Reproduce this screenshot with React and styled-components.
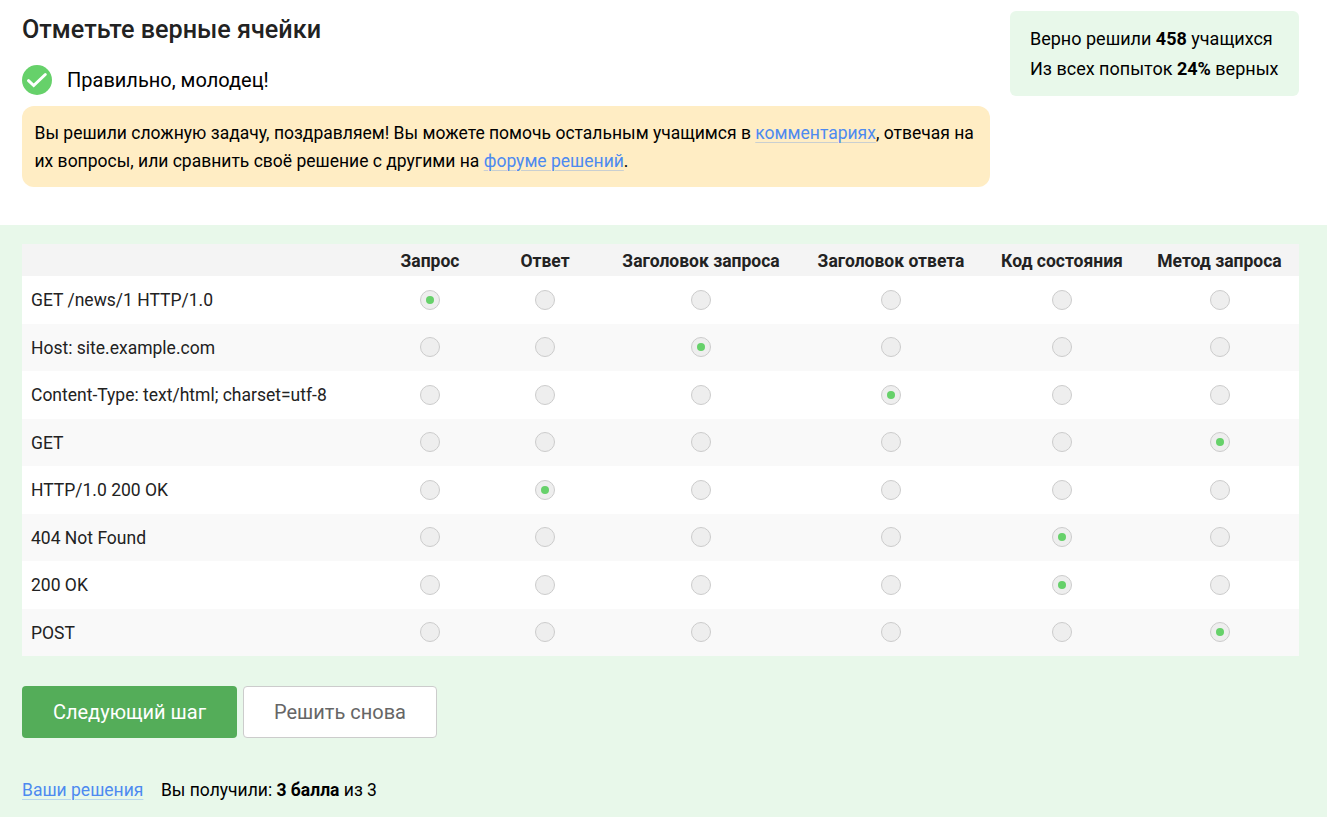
import React from "react";
import styled, { createGlobalStyle } from "styled-components";

const Global = createGlobalStyle`
  html, body { margin: 0; padding: 0; background: #fff; }
  body { font-family: Roboto, "Noto Sans", sans-serif; font-size: 17.5px; color: #000; }
`;
const Page = styled.div`width: 1327px; height: 817px; overflow: hidden; display: flex; flex-direction: column;`;
const Top = styled.section`
  height: 225px; box-sizing: border-box; padding: 0 28px 0 22px;
  display: flex; align-items: flex-start; gap: 20px;
`;
const Main = styled.div`width: 968px; flex: none;`;
const Title = styled.h1`
  margin: 0; padding-top: 15px; font-size: 25.2px; line-height: 30px; font-weight: 500; color: #222;
`;
const Status = styled.div`
  display: flex; align-items: center; gap: 15px; height: 30px; margin-top: 20px;
  font-size: 20px; line-height: 30px;
`;
const Message = styled.div`
  margin-top: 11px; padding: 12.5px 12px 12.5px 12.5px; background: #ffedc4; border-radius: 12px;
  line-height: 28px;
`;
const Link = styled.a`
  color: #4d8af0; text-decoration: underline 1px rgba(77, 138, 240, 0.3); text-underline-offset: 3px;
`;
const Stats = styled.aside`
  margin-top: 11px; width: 289px; height: 85px; box-sizing: border-box; padding: 13px 20px 11px;
  background: #e8f8ea; border-radius: 6px; font-size: 18px; line-height: 30px; white-space: nowrap;
`;
const Quiz = styled.section`flex: 1; background: #e8f8ea; padding: 19px 28px 0 22px;`;
const Matrix = styled.div`display: flex; flex-direction: column;`;
const columns = "352px 112px 118px 194px 186px 156px 159px";
const Head = styled.div`
  display: grid; grid-template-columns: ${columns}; height: 32px; box-sizing: border-box; padding-top: 2px;
  align-items: center; background: #f4f4f4; font-weight: 700; color: #222; text-align: center;
`;
const Row = styled.div`
  display: grid; grid-template-columns: ${columns}; height: 47.5px; align-items: center;
  background: ${(props) => (props.$alt ? "#f9f9f9" : "#fff")};
`;
const Label = styled.div`padding: 1px 0 0 9px; color: #222;`;
const Cell = styled.div`display: flex; justify-content: center;`;
const Radio = styled.span`
  width: 20px; height: 20px; box-sizing: border-box; border-radius: 50%;
  background: #eee; border: 1px solid #ccc;
  display: flex; align-items: center; justify-content: center;
  &::after {
    content: ""; width: 8px; height: 8px; border-radius: 50%;
    background: ${(props) => (props.$on ? "#66d16a" : "transparent")};
  }
`;
const Actions = styled.div`display: flex; gap: 6px; margin-top: 30px;`;
const Primary = styled.button`
  width: 215px; height: 52px; border: 0; border-radius: 4px; background: #54ad59; color: #fff;
  font: 400 20px Roboto, sans-serif; padding: 0;
`;
const Secondary = styled.button`
  width: 194px; height: 52px; box-sizing: border-box; border: 1px solid #ccc; border-radius: 4px;
  background: #fff; color: #666; font: 400 20px Roboto, sans-serif; padding: 0;
`;
const Footer = styled.div`display: flex; gap: 17.5px; margin-top: 40px; line-height: 24px;`;

const rows = [
  ["GET /news/1 HTTP/1.0", 0],
  ["Host: site.example.com", 2],
  ["Content-Type: text/html; charset=utf-8", 3],
  ["GET", 5],
  ["HTTP/1.0 200 OK", 1],
  ["404 Not Found", 4],
  ["200 OK", 4],
  ["POST", 5],
];
const heads = ["Запрос", "Ответ", "Заголовок запроса", "Заголовок ответа", "Код состояния", "Метод запроса"];

const CheckIcon = () => (
  <svg width="30" height="30" viewBox="0 0 30 30" aria-hidden="true">
    <circle cx="15" cy="15" r="15" fill="#66d16a" />
    <path d="M6.5 15.7l5.2 4.8L23.3 9.5" fill="none" stroke="#fff" strokeWidth="3" strokeLinecap="round" />
  </svg>
);

export default function App() {
  return (
    <Page>
      <Global />
      <Top>
        <Main>
          <Title>Отметьте верные ячейки</Title>
          <Status><CheckIcon />Правильно, молодец!</Status>
          <Message>
            Вы решили сложную задачу, поздравляем! Вы можете помочь остальным учащимся в <Link>комментариях</Link>, отвечая на их вопросы, или сравнить своё решение с другими на <Link>форуме решений</Link>.
          </Message>
        </Main>
        <Stats>
          Верно решили <b>458</b> учащихся<br />
          Из всех попыток <b>24%</b> верных
        </Stats>
      </Top>
      <Quiz>
        <Matrix>
          <Head>
            <div />
            {heads.map((h) => <div key={h}>{h}</div>)}
          </Head>
          {rows.map(([label, on], i) => (
            <Row key={i} $alt={i % 2 === 1}>
              <Label>{label}</Label>
              {heads.map((h, c) => (
                <Cell key={h}><Radio $on={c === on} /></Cell>
              ))}
            </Row>
          ))}
        </Matrix>
        <Actions>
          <Primary>Следующий шаг</Primary>
          <Secondary>Решить снова</Secondary>
        </Actions>
        <Footer>
          <span><Link>Ваши решения</Link></span>
          <span>Вы получили: <b>3 балла</b> из 3</span>
        </Footer>
      </Quiz>
    </Page>
  );
}
